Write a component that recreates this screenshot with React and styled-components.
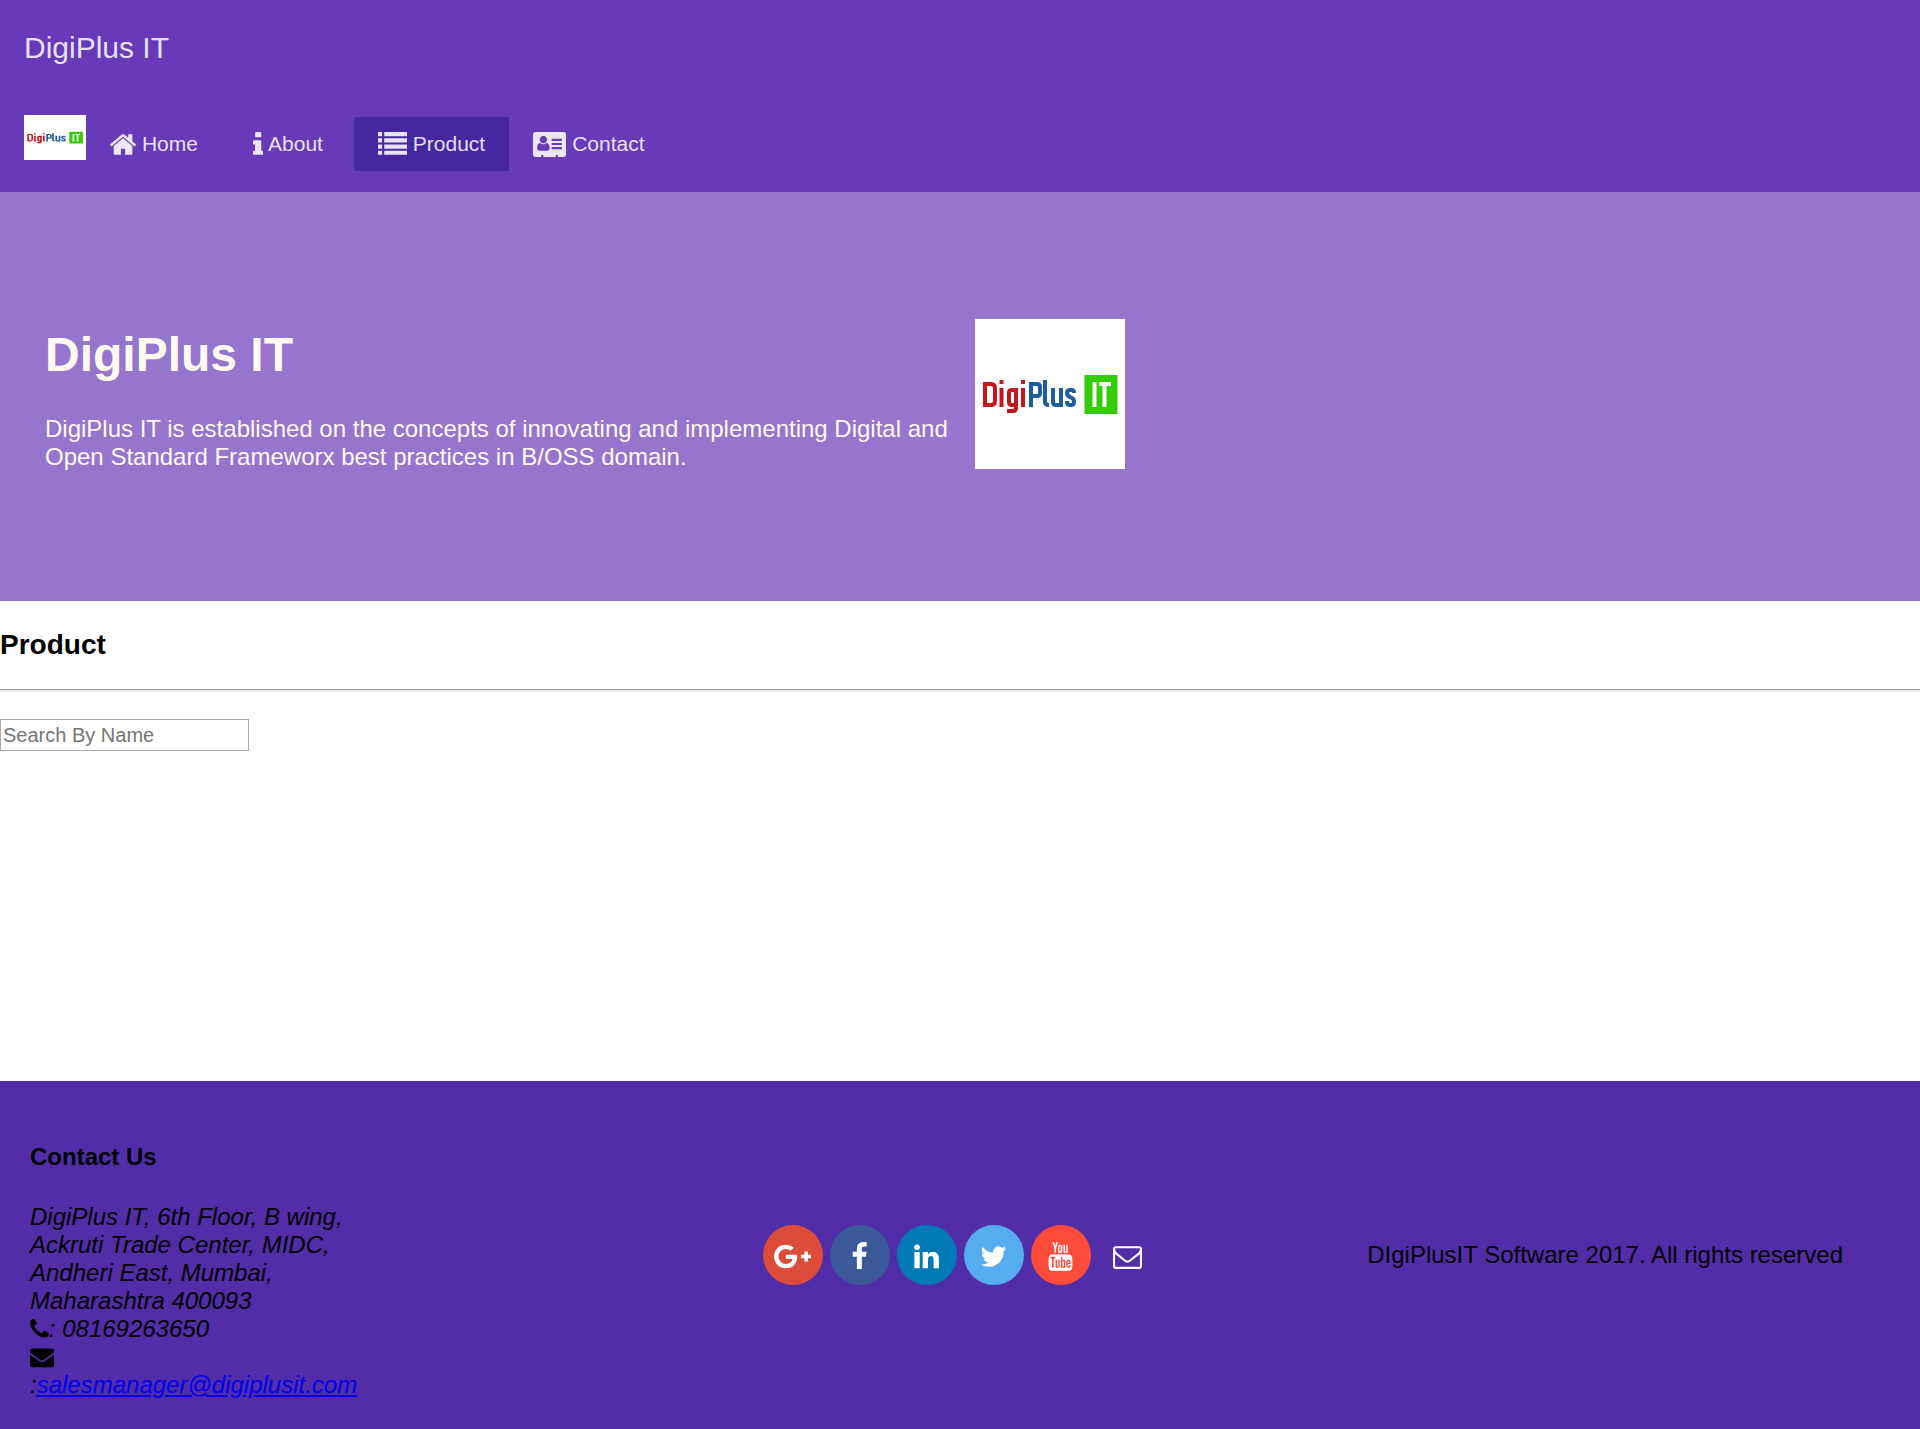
import React from 'react';
import styled, { createGlobalStyle, css } from 'styled-components';

const GlobalStyle = createGlobalStyle`
  * { box-sizing: border-box; }
  body {
    margin: 0;
    background: #fff;
    color: #000;
    font: 24px/28px "Liberation Sans", Arial, sans-serif;
  }
`;

const Page = styled.div`
  display: flex;
  flex-direction: column;
  min-height: 100vh;
`;

const Toolbar = styled.header`
  padding: 0 24px;
  background: #673ab7;
  color: rgba(255, 255, 255, 0.87);
`;

const ToolbarTitle = styled.div`
  display: flex;
  align-items: center;
  height: 96px;
  font-size: 30px;
`;

const Glyph = styled.svg`
  height: ${(p) => p.$size}px;
  width: auto;
  vertical-align: -4px;
  fill: currentColor;
`;

const Nav = styled.nav`
  display: flex;
  align-items: flex-start;
  height: 96px;
  padding-top: 19px;
`;

const NavLink = styled.a`
  min-width: 132px;
  height: 54px;
  margin-top: 2px;
  padding: 0 24px;
  border-radius: 3px;
  color: inherit;
  font-size: 21px;
  line-height: 54px;
  text-align: center;
  text-decoration: none;
  white-space: nowrap;
  ${(p) => p.$active && css`background: #45279f;`}

  ${Glyph} {
    vertical-align: -8px;
  }
`;

const LogoArt = styled.svg`
  display: block;
  flex: none;
  width: ${(p) => p.$width}px;
  height: ${(p) => p.$height}px;
  background: #fff;
`;

const Hero = styled.section`
  display: flex;
  align-items: flex-start;
  gap: 24px;
  min-height: 409px;
  padding: 127px 45px;
  background: #9575cd;
  color: #fffaf0;
`;

const HeroCopy = styled.div`
  flex: 0 1 906px;
`;

const HeroTitle = styled.h1`
  margin: 8px 0 32px;
  font-size: 48px;
  line-height: 56px;
`;

const HeroText = styled.p`
  margin: 0;
`;

const Main = styled.main`
  flex: 1;
  min-height: 480px;
`;

const SectionTitle = styled.h2`
  margin: 28px 0;
  font-size: 28px;
  line-height: 32px;
`;

const Rule = styled.hr`
  height: 3px;
  margin: 0 0 27px;
  border: 0;
  border-top: 1px solid #9a9a9a;
  background: #eee;
`;

const SearchInput = styled.input`
  display: block;
  width: 249px;
  height: 32px;
  padding: 1px 2px;
  border: 1px solid #a9a9a9;
  font: 20px "Liberation Sans", Arial, sans-serif;
  &::placeholder { color: #757575; }
`;

const Footer = styled.footer`
  display: grid;
  grid-template-columns: 1fr auto 1fr;
  align-items: center;
  min-height: 348px;
  padding: 0 30px;
  background: #512da8;
`;

const Contact = styled.div`
  width: 328px;
  padding-top: 32px;
`;

const ContactTitle = styled.h4`
  margin: 0 0 32px;
  font-size: 24px;
`;

const Address = styled.address`
  font-style: italic;
`;

const MailLink = styled.a`
  color: #00e;
`;

const Socials = styled.div`
  display: flex;
  gap: 7px;
`;

const SocialLink = styled.a`
  display: flex;
  align-items: center;
  justify-content: center;
  width: 60px;
  height: 60px;
  padding-top: 2px;
  border-radius: 50%;
  background: ${(p) => p.$color};
  color: #fff;
`;

const Copyright = styled.p`
  justify-self: end;
  margin: 0 47px 0 0;
`;

const icons = {
  home: [1612, 'M1472 992v480q0 26-19 45t-45 19h-384v-384h-256v384h-384q-26 0-45-19t-19-45v-480q0-1 .5-3t.5-3l575-474 575 474q1 2 1 6zm223-69l-62 74q-8 9-21 11h-3q-13 0-21-7l-692-577-692 577q-12 8-24 7-13-2-21-11l-62-74q-8-10-7-23.5t11-21.5l719-599q32-26 76-26t76 26l244 204v-195q0-14 9-23t23-9h192q14 0 23 9t9 23v408l219 182q10 8 11 21.5t-7 23.5z', 90],
  info: [640, 'M1216 1344v128q0 26-19 45t-45 19h-512q-26 0-45-19t-19-45v-128q0-26 19-45t45-19h64v-384h-64q-26 0-45-19t-19-45v-128q0-26 19-45t45-19h384q26 0 45 19t19 45v576h64q26 0 45 19t19 45zm-128-1152v192q0 26-19 45t-45 19h-256q-26 0-45-19t-19-45v-192q0-26 19-45t45-19h256q26 0 45 19t19 45z', 576],
  list: [1792, 'M0 1280h256v256H0zM0 896h256v256H0zM0 512h256v256H0zM0 128h256v256H0zM384 1280h1408v256H384zM384 896h1408v256H384zM384 512h1408v256H384zM384 128h1408v256H384z'],
  card: [2048, 'M1024 1131q0-64-9-117.5t-29.5-103-60.5-78-97-28.5q-6 4-30 18t-37.500 21.500-35.500 17.500-43 14.500-42 4.500-42-4.500-43-14.500-35.500-17.500-37.500-21.500-30-18q-57 0-97 28.500t-60.500 78-29.500 103-9 117.500 37 106.500 91 42.500h512q54 0 91-42.500t37-106.500zM867 592q0-94-66.500-160.500t-160.500-66.500-160.500 66.500-66.500 160.500 66.500 160.500 160.500 66.500 160.500-66.500 66.500-160.500zM1152 1056h640v128h-640zM1152 800h640v128h-640zM1152 544h640v128h-640zM160 128h1728q66 0 113 47t47 113v1216q0 66-47 113t-113 47h-352v-96q0-14-9-23t-23-9h-64q-14 0-23 9t-9 23v96h-768v-96q0-14-9-23t-23-9h-64q-14 0-23 9t-9 23v96h-352q-66 0-113-47t-47-113v-1216q0-66 47-113t113-47z'],
  phone: [1408, 'M1600 1240q0 27-10 70.5t-21 68.5q-21 50-122 106-94 51-186 51-27 0-53-3.5t-57.5-12.5-47-14.5-55.5-20.5-49-18q-98-35-175-83-127-79-264-216t-216-264q-48-77-83-175-3-9-18-49t-20.5-55.5-14.5-47-12.5-57.5-3.500-53q0-92 51-186 56-101 106-122 25-11 68.5-21t70.5-10q14 0 21 3 18 6 53 76 11 19 30 54t35 63.5 31 53.5q3 4 17.5 25t21.5 35.5 7 28.5q0 20-28.5 50t-62 55-62 53-28.5 46q0 9 5 22.5t8.5 20.5 14 24 11.5 19q76 137 174 235t235 174q2 1 19 11.5t24 14 20.5 8.5 22.5 5q18 0 46-28.5t53-62 55-62 50-28.5q14 0 28.5 7t35.5 21.5 25 17.5q25 15 53.5 31t63.5 35 54 30q70 35 76 53 3 7 3 21z', 192],
  envelope: [1792, 'M1792 710v794q0 66-47 113t-113 47h-1472q-66 0-113-47t-47-113v-794q44 49 101 87 362 246 497 345 57 42 92.5 65.5t94.5 48 110 24.5h2q51 0 110-24.5t94.5-48 92.5-65.5q170-123 498-345 57-39 100-87zm0-294q0 79-49 151t-122 123q-376 261-468 325-10 7-42.5 31t-54 38.5-52 32.5-57.5 27-50 9h-2q-23 0-50-9t-57.5-27-52-32.5-54-38.5-42.5-31q-91-64-262-182.5t-205-142.5q-62-42-117-115.5t-55-136.5q0-78 41.5-130t118.5-52h1472q65 0 112.5 47t47.5 113z'],
  mail: [1792, 'M1664 1504v-768q-32 36-69 66-268 206-426 338-51 43-83 67t-86.5 48.5-102.5 24.5h-2q-48 0-102.5-24.5t-86.5-48.5-83-67q-158-132-426-338-37-30-69-66v768q0 13 9.5 22.5t22.5 9.5h1472q13 0 22.5-9.5t9.5-22.5zm0-1051v-24.5l-.5-13-3-12.5-5.5-9-9-7.5-14-2.5h-1472q-13 0-22.5 9.5t-9.5 22.5q0 168 147 284 193 152 401 317 6 5 35 29.5t46 37.5 44.5 31.5 50.5 27.5 43 9h2q20 0 43-9t50.5-27.5 44.5-31.5 46-37.5 35-29.5q208-165 401-317 54-43 100.5-115.5t46.5-131.500zm128-37v1088q0 66-47 113t-113 47h-1472q-66 0-113-47t-47-113v-1088q0-66 47-113t113-47h1472q66 0 113 47t47 113z'],
  google: [2304, 'M1437 913q0 208-87 370.5t-248 254-369 91.5q-149 0-285-58t-234-156-156-234-58-285 58-285 156-234 234-156 285-58q286 0 491 192l-199 191q-117-113-292-113-123 0-227.5 62t-165.5 168.5-61 232.5 61 232.5 165.5 168.5 227.5 62q83 0 152.5-23t114.5-57.5 78.5-78.5 49-83 21.5-74h-416v-252h692q12 63 12 122zm867-122v210h-209v209h-210v-209h-209v-210h209v-209h210v209h209z'],
  facebook: [1792, 'M1343 12v264h-157q-86 0-116 36t-30 108v189h293l-39 296h-254v759h-306v-759h-255v-296h255v-218q0-186 104-288.5t277-102.5q147 0 228 12z'],
  linkedin: [1792, 'M477 625v991h-330v-991h330zm21-306q1 73-50.5 122t-135.5 49h-2q-82 0-132-49t-50-122q0-74 51.5-122.5t134.5-48.5 133 48.5 51 122.5zm1166 729v568h-329v-530q0-105-40.5-164.5t-126.500-59.500q-63 0-105.5 34.5t-63.500 85.500q-11 30-11 81v553h-329q2-399 2-647t-1-296l-1-48h329v144h-2q20-32 41-56t56.5-52 87-43.5 114.5-15.5q171 0 275 113.5t104 332.5z'],
  twitter: [1792, 'M1684 408q-67 98-162 167 1 14 1 42 0 130-38 259.5t-115.5 248.5-184.5 210.5-258 146-323 54.5q-271 0-496-145 35 4 78 4 225 0 401-138-105-2-188-64.5t-114-159.5q33 5 61 5 43 0 85-11-112-23-185.500-111.500t-73.500-205.500v-4q68 38 146 41-66-44-105-115t-39-154q0-88 44-163 121 149 294.500 238.500t371.500 99.500q-8-38-8-74 0-134 94.500-228.500t228.500-94.500q140 0 236 102 109-21 205-78-37 115-142 178 93-10 186-50z'],
  youtube: [1792, 'M1099 1244v211q0 67-39 67-23 0-45-22v-301q22-22 45-22 39 0 39 67zm338 1v46h-90v-46q0-68 45-68t45 68zm-966-218h107v-94h-312v94h105v569h100v-569zm288 569h89v-494h-89v378q-30 42-57 42-18 0-21-21-1-3-1-35v-364h-89v391q0 49 8 73 12 37 58 37 48 0 102-61v54zm429-148v-197q0-73-9-99-17-56-71-56-50 0-93 54v-217h-89v663h89v-48q45 55 93 55 54 0 71-55 9-27 9-100zm338-10v-13h-91q0 51-2 61-7 36-40 36-46 0-46-69v-87h179v-103q0-79-27-116-39-51-106-51-68 0-107 51-28 37-28 116v173q0 79 29 116 39 51 108 51 72 0 108-53 18-27 21-54 2-9 2-58zm-608-913v-210q0-69-43-69t-43 69v210q0 70 43 70t43-70zm719 751q0 234-26 350-14 59-58 99t-102 46q-184 21-555 21t-555-21q-58-6-102.5-46t-57.5-99q-26-112-26-350 0-234 26-350 14-59 58-99t103-47q183-20 554-20t555 20q58 7 102.5 47t57.5 99q26 112 26 350zm-998-1276h102l-121 399v271h-100v-271q-14-74-61-212-37-103-65-187h106l71 263zm370 333v175q0 81-28 118-38 51-106 51-67 0-105-51-28-38-28-118v-175q0-80 28-117 38-51 105-51 68 0 106 51 28 37 28 117zm335-162v499h-91v-55q-53 62-103 62-46 0-59-37-8-24-8-75v-394h91v367q0 33 1 35 3 22 21 22 27 0 57-43v-381h91z'],
};

function Icon({ name, size = 29 }) {
  const [width, path, left = 0] = icons[name];
  return (
    <Glyph $size={size} viewBox={`${left} 0 ${width} 1792`} aria-hidden="true">
      <path d={path} fillRule="evenodd" />
    </Glyph>
  );
}

/* Brand mark: condensed strokes on a 150 x 150 white tile. */
function Logo({ width, height }) {
  return (
    <LogoArt
      $width={width}
      $height={height}
      viewBox="0 0 150 150"
      preserveAspectRatio="none"
      role="img"
      aria-label="DigiPlus IT"
    >
      <g fill="none" strokeWidth="4">
        <g stroke="#c4161c">
          <path d="M10 65v21h6q4 0 4-4V69q0-4-4-4z" />
          <path d="M26.500 69v19M26.500 61v4M48 69v19M48 61v4" />
          <path d="M41 86h-4q-3 0-3-3v-9q0-3 3-3h4v18q0 3-3 3h-6" />
        </g>
        <g stroke="#1b5e9b">
          <path d="M56 88V65h6q3 0 3 3v6q0 3-3 3h-6" />
          <path d="M70 61v22q0 3 4 3" />
          <path d="M78 69v14q0 3 3 3h5V69" />
          <path d="M99 74v-1q0-2-3-2h-1q-3 0-3 3 0 3 3 4l2 1q2 1 2 4 0 3-3 3h-1q-3 0-3-3v-1" />
        </g>
      </g>
      <rect x="109.500" y="56" width="33" height="39" fill="#33cc05" />
      <path d="M119.500 63v25M129.500 65v23M124 65h12" stroke="#fff" strokeWidth="4" fill="none" />
    </LogoArt>
  );
}

const navItems = [
  ['home', 'Home'],
  ['info', 'About'],
  ['list', 'Product'],
  ['card', 'Contact'],
];

const socials = [
  ['google', 'Google Plus', '#dd4b39'],
  ['facebook', 'Facebook', '#3b5998'],
  ['linkedin', 'LinkedIn', '#007bb5'],
  ['twitter', 'Twitter', '#55acee'],
  ['youtube', 'YouTube', '#ff4b39'],
  ['mail', 'Email', 'transparent'],
];

export default function App() {
  return (
    <Page>
      <GlobalStyle />
      <Toolbar>
        <ToolbarTitle>DigiPlus IT</ToolbarTitle>
        <Nav>
          <Logo width={62} height={45} />
          {navItems.map(([icon, label]) => (
            <NavLink key={icon} href="#" $active={icon === 'list'}>
              <Icon name={icon} /> {label}
            </NavLink>
          ))}
        </Nav>
      </Toolbar>
      <Hero>
        <HeroCopy>
          <HeroTitle>DigiPlus IT</HeroTitle>
          <HeroText>
            DigiPlus IT is established on the concepts of innovating and implementing
            Digital and Open Standard Frameworx best practices in B/OSS domain.
          </HeroText>
        </HeroCopy>
        <Logo width={150} height={150} />
      </Hero>
      <Main>
        <SectionTitle>Product</SectionTitle>
        <Rule />
        <SearchInput type="text" placeholder="Search By Name" aria-label="Search By Name" />
      </Main>
      <Footer>
        <Contact>
          <ContactTitle>Contact Us</ContactTitle>
          <Address>
            DigiPlus IT, 6th Floor, B wing, Ackruti Trade Center, MIDC, Andheri East, Mumbai,
            Maharashtra 400093
            <br />
            <Icon name="phone" size={24} />: 08169263650
            <br />
            <Icon name="envelope" size={24} />
            <br />:<MailLink href="mailto:salesmanager@digiplusit.com">salesmanager@digiplusit.com</MailLink>
          </Address>
        </Contact>
        <Socials>
          {socials.map(([icon, label, color]) => (
            <SocialLink key={icon} href="#" aria-label={label} $color={color}>
              <Icon name={icon} />
            </SocialLink>
          ))}
        </Socials>
        <Copyright>DIgiPlusIT Software 2017. All rights reserved</Copyright>
      </Footer>
    </Page>
  );
}
